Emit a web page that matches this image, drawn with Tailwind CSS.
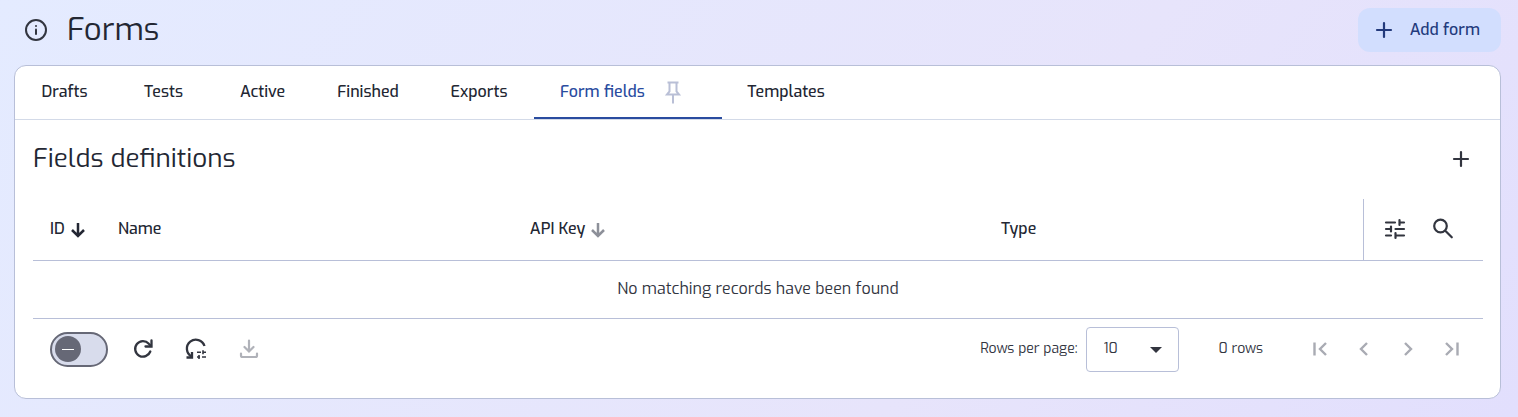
<!DOCTYPE html>
<html lang="en">
<head>
  <meta charset="UTF-8" />
  <meta name="viewport" content="width=device-width, initial-scale=1.0" />
  <title>Forms</title>
  <script src="https://cdn.jsdelivr.net/npm/@tailwindcss/browser@4"></script>
</head>
<body class="min-h-screen bg-linear-125 from-[#e4ebff] via-[#e7e4fb] via-65% to-[#e2dffd] font-[Exo,'Exo_2',Roboto,sans-serif] text-[#232733] pl-3.5 pr-[17px] pt-2 pb-4">

  <!-- Header -->
  <header class="flex items-center justify-between h-11 mb-[13px]">
    <div class="flex items-center gap-[19px] pl-2.5">
      <svg class="size-6 text-[#32353f]" viewBox="0 0 24 24" fill="none" stroke="currentColor" stroke-width="2" stroke-linecap="round">
        <circle cx="12" cy="12" r="10" />
        <path d="M12 11.5v4.5" />
        <path d="M12 8h.01" />
      </svg>
      <h1 class="text-[31px] leading-10">Forms</h1>
    </div>
    <button type="button" class="flex items-center gap-3.5 h-11 pl-3.5 pr-[21px] rounded-xl bg-[#d2defe] text-[#233a7c] text-base font-medium">
      <svg class="size-6" viewBox="0 0 24 24" fill="none" stroke="currentColor" stroke-width="2.200" stroke-linecap="round"><path d="M12 5v14M5 12h14" /></svg>
      Add form
    </button>
  </header>

  <main class="bg-white border border-[#b8bfd8] rounded-xl">
    <!-- Tabs -->
    <nav class="flex h-[54px] border-b border-[#d3dae8] text-base font-medium">
      <a href="#" class="w-[99px] flex items-center justify-center border-b-2 border-transparent">Drafts</a>
      <a href="#" class="w-[99px] flex items-center justify-center border-b-2 border-transparent">Tests</a>
      <a href="#" class="w-[99px] flex items-center justify-center border-b-2 border-transparent">Active</a>
      <a href="#" class="w-28 flex items-center justify-center border-b-2 border-transparent">Finished</a>
      <a href="#" class="w-[110px] flex items-center justify-center border-b-2 border-transparent">Exports</a>
      <a href="#" class="w-[188px] flex items-center gap-4 pl-[26px] border-b-2 border-[#2a4c9f] text-[#2a4c9f]">
        Form fields
        <svg class="size-6 text-[#b9bfd6]" viewBox="0 0 24 24" fill="none" stroke="currentColor" stroke-width="2">
          <path d="M6.500 2.500h11M8.500 2.500v9L6 14.500h12l-2.500-3v-9M12 14.500v9" />
        </svg>
      </a>
      <a href="#" class="w-32 flex items-center justify-center border-b-2 border-transparent">Templates</a>
    </nav>

    <section class="pl-[18px] pr-[17px] pt-5 pb-[18px]">
      <div class="flex items-center justify-between h-[38px] pr-2.5 mb-[21px]">
        <h2 class="text-[26px] leading-9">Fields definitions</h2>
        <button type="button" aria-label="Add field" class="text-[#32353f]">
          <svg class="size-6" viewBox="0 0 24 24" fill="none" stroke="currentColor" stroke-width="2.200" stroke-linecap="round"><path d="M12 5v14M5 12h14" /></svg>
        </button>
      </div>

      <!-- Table -->
      <table class="w-full table-fixed border-collapse text-base">
        <thead>
          <tr class="h-[61px] border-b border-[#b8bfd8] text-left">
            <th class="w-[68px] pl-[17px] font-medium">
              <span class="flex items-center gap-1">ID
                <svg class="size-[18px] shrink-0" viewBox="0 0 18 18" fill="none" stroke="currentColor" stroke-width="2.500"><path d="M9 3v13M3 10l6 6 6-6" /></svg>
              </span>
            </th>
            <th class="w-[28.400%] pl-[17px] font-medium">Name</th>
            <th class="w-[32.500%] pl-[17px] font-medium">
              <span class="flex items-center gap-1">API Key
                <svg class="size-[18px] shrink-0 text-[#8d9099]" viewBox="0 0 18 18" fill="none" stroke="currentColor" stroke-width="2.500"><path d="M9 3v13M3 10l6 6 6-6" /></svg>
              </span>
            </th>
            <th class="pl-[17px] font-medium">Type</th>
            <th class="w-[120px] border-l border-[#b8bfd8]">
              <span class="flex items-center gap-6 pl-[19px] text-[#32353f]">
                <button type="button" aria-label="Filters">
                  <svg class="size-6" viewBox="0 0 24 24" fill="none" stroke="currentColor" stroke-width="2.200" stroke-linecap="round">
                    <path d="M3 5.500h9M16.500 3v5M16.500 5.500H21M3 12h5M8 9.500v5M12.500 12H21M3 18.500h5M12.500 16v5M12.500 18.500H21" />
                  </svg>
                </button>
                <button type="button" aria-label="Search">
                  <svg class="size-6" viewBox="0 0 24 24" fill="none" stroke="currentColor" stroke-width="2.200" stroke-linecap="round"><circle cx="9.500" cy="9" r="6.300" /><path d="M14.500 14l6.300 6.300" /></svg>
                </button>
              </span>
            </th>
          </tr>
        </thead>
        <tbody>
          <tr class="h-[58px] border-b border-[#b8bfd8]">
            <td colspan="5" class="text-center text-base text-[#32353f]">No matching records have been found</td>
          </tr>
        </tbody>
      </table>

      <!-- Footer -->
      <div class="flex items-center justify-between h-[61px] pl-[17px] pr-[19px] text-[#32353f]">
        <div class="flex items-center">
          <label class="relative w-[58px] h-[35px] mr-[23px]">
            <input type="checkbox" aria-label="Auto refresh" class="peer sr-only" />
            <span class="flex items-center h-full rounded-full border-2 border-[#666876] bg-[#d8dcec] px-[3px] peer-checked:justify-end">
              <span class="flex items-center justify-center size-[26px] rounded-full bg-[#666876]">
                <span class="w-3 h-px bg-white"></span>
              </span>
            </span>
          </label>
          <button type="button" aria-label="Refresh" class="mr-[29px]">
            <svg class="size-6" viewBox="0 0 24 24" fill="none" stroke="currentColor" stroke-width="2.300" stroke-linecap="round">
              <path d="M19.300 14.500A7.800 7.800 0 1 1 17.800 6.700L20 9" /><path d="M20.500 3.500V9.500H14.500" />
            </svg>
          </button>
          <button type="button" aria-label="Reset filters" class="mr-[29px]">
            <svg class="size-6" viewBox="0 0 24 24" fill="none" stroke="currentColor" stroke-width="2">
              <path d="M20.500 9A9 9 0 1 0 7.500 19.500" stroke-width="2.300" /><path d="M2.500 20.500H8V15" stroke-width="2.300" />
              <path d="M13 15.300h4M19 13.300v4M19 15.300h3M13 20h3M15 18v4M18 20h4" stroke-width="1.600" />
            </svg>
          </button>
          <button type="button" aria-label="Download" disabled class="text-[#b0b2b9]">
            <svg class="size-6" viewBox="0 0 24 24" fill="none" stroke="currentColor" stroke-width="2.200" stroke-linecap="round">
              <path d="M12 3.500V14M7.500 10l4.500 4.500L16.500 10M4 16.500V18.500Q4 20 5.500 20H18.500Q20 20 20 18.500V16.500" />
            </svg>
          </button>
        </div>

        <div class="flex items-center text-sm">
          <label for="perPage">Rows per page:</label>
          <div class="relative ml-2">
            <select id="perPage" class="appearance-none w-[93px] h-[45px] pl-[17px] rounded border border-[#b8bfd8] bg-white">
              <option>10</option>
              <option>25</option>
              <option>50</option>
            </select>
            <svg class="absolute right-[17px] top-5 w-3 h-1.5 pointer-events-none" viewBox="0 0 12 6" fill="currentColor"><path d="M0 0h12L6 6z" /></svg>
          </div>
          <span class="ml-10 mr-[45px]">0 rows</span>
          <div class="flex items-center gap-5 text-[#a9abb3]">
            <button type="button" aria-label="First page" disabled>
              <svg class="size-6" viewBox="0 0 24 24" fill="none" stroke="currentColor" stroke-width="2.400"><path d="M6.500 5.500v13M18 6l-6 6 6 6" /></svg>
            </button>
            <button type="button" aria-label="Previous page" disabled>
              <svg class="size-6" viewBox="0 0 24 24" fill="none" stroke="currentColor" stroke-width="2.400"><path d="M15 6l-6 6 6 6" /></svg>
            </button>
            <button type="button" aria-label="Next page" disabled>
              <svg class="size-6" viewBox="0 0 24 24" fill="none" stroke="currentColor" stroke-width="2.400"><path d="M9 6l6 6-6 6" /></svg>
            </button>
            <button type="button" aria-label="Last page" disabled>
              <svg class="size-6" viewBox="0 0 24 24" fill="none" stroke="currentColor" stroke-width="2.400"><path d="M6 6l6 6-6 6M17.500 5.500v13" /></svg>
            </button>
          </div>
        </div>
      </div>
    </section>
  </main>
</body>
</html>
